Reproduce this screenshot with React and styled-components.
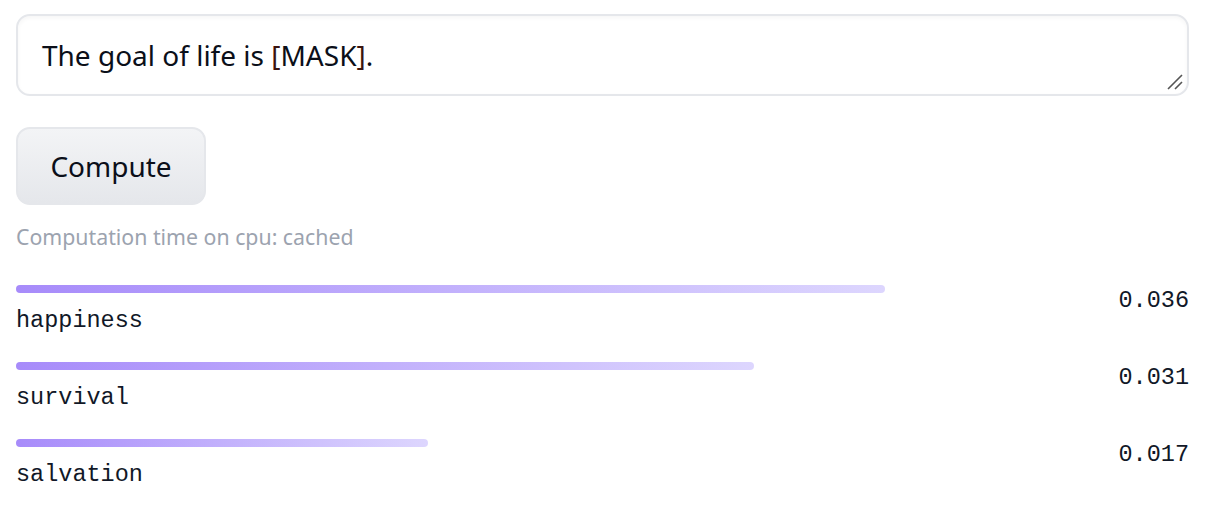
import React from "react";
import styled, { createGlobalStyle } from "styled-components";

const GlobalStyle = createGlobalStyle`
  body {
    margin: 0;
    background: #ffffff;
    font-family: "Noto Sans", "Open Sans", sans-serif;
    color: #111827;
  }
`;

const Page = styled.div`
  padding: 14px 17px 0 16px;
  display: flex;
  flex-direction: column;
`;

const InputBox = styled.div`
  position: relative;
  height: 82px;
  box-sizing: border-box;
  border: 2px solid #e5e7eb;
  border-radius: 14px;
  box-shadow: inset 0 2px 4px rgba(0, 0, 0, 0.04);
  padding: 0 24px;
  display: flex;
  align-items: center;
  font-size: 28px;
  color: #0b0f19;
`;

const Mask = styled.span`
  color: #3b1410;
`;

const Grip = styled.svg`
  position: absolute;
  right: 3px;
  bottom: 3px;
`;

const ComputeButton = styled.button`
  margin-top: 31px;
  align-self: flex-start;
  width: 190px;
  height: 78px;
  border: 2px solid #e5e7eb;
  border-radius: 14px;
  background: linear-gradient(to bottom, #f3f4f6, #e5e7eb);
  font-family: "Noto Sans", "Open Sans", sans-serif;
  font-size: 28px;
  color: #0b0f19;
  cursor: pointer;
`;

const Status = styled.div`
  margin-top: 18px;
  font-size: 21.3px;
  line-height: 28px;
  color: #9ca3af;
`;

const Results = styled.div`
  margin-top: 34px;
  display: flex;
  flex-direction: column;
  gap: 29.5px;
`;

const Row = styled.div`
  display: flex;
  justify-content: space-between;
  align-items: flex-start;
  font-family: "Liberation Mono", "DejaVu Sans Mono", monospace;
  font-size: 23.5px;
  line-height: 1;
  color: #111827;
`;

const LabelCol = styled.div`
  flex: 1;
`;

const Bar = styled.div`
  height: 8px;
  border-radius: 4px;
  margin-bottom: 16px;
  background: linear-gradient(to right, #a78bfa, #ddd6fe);
`;

const Score = styled.span`
  padding-top: 4px;
`;

const results = [
  { label: "happiness", score: "0.036", width: 869 },
  { label: "survival", score: "0.031", width: 738 },
  { label: "salvation", score: "0.017", width: 412 },
];

export default function App() {
  return (
    <>
      <GlobalStyle />
      <Page>
        <InputBox>
          <span>
            The goal of life is <Mask>[</Mask>MASK<Mask>]</Mask>.
          </span>
          <Grip width="18" height="18" viewBox="0 0 18 18">
            <path d="M2 16 L16 2 M9 16 L16 9" stroke="#555" strokeWidth="1.6" fill="none" />
          </Grip>
        </InputBox>
        <ComputeButton>Compute</ComputeButton>
        <Status>Computation time on cpu: cached</Status>
        <Results>
          {results.map((r) => (
            <Row key={r.label}>
              <LabelCol>
                <Bar style={{ width: r.width }} />
                <span>{r.label}</span>
              </LabelCol>
              <Score>{r.score}</Score>
            </Row>
          ))}
        </Results>
      </Page>
    </>
  );
}
